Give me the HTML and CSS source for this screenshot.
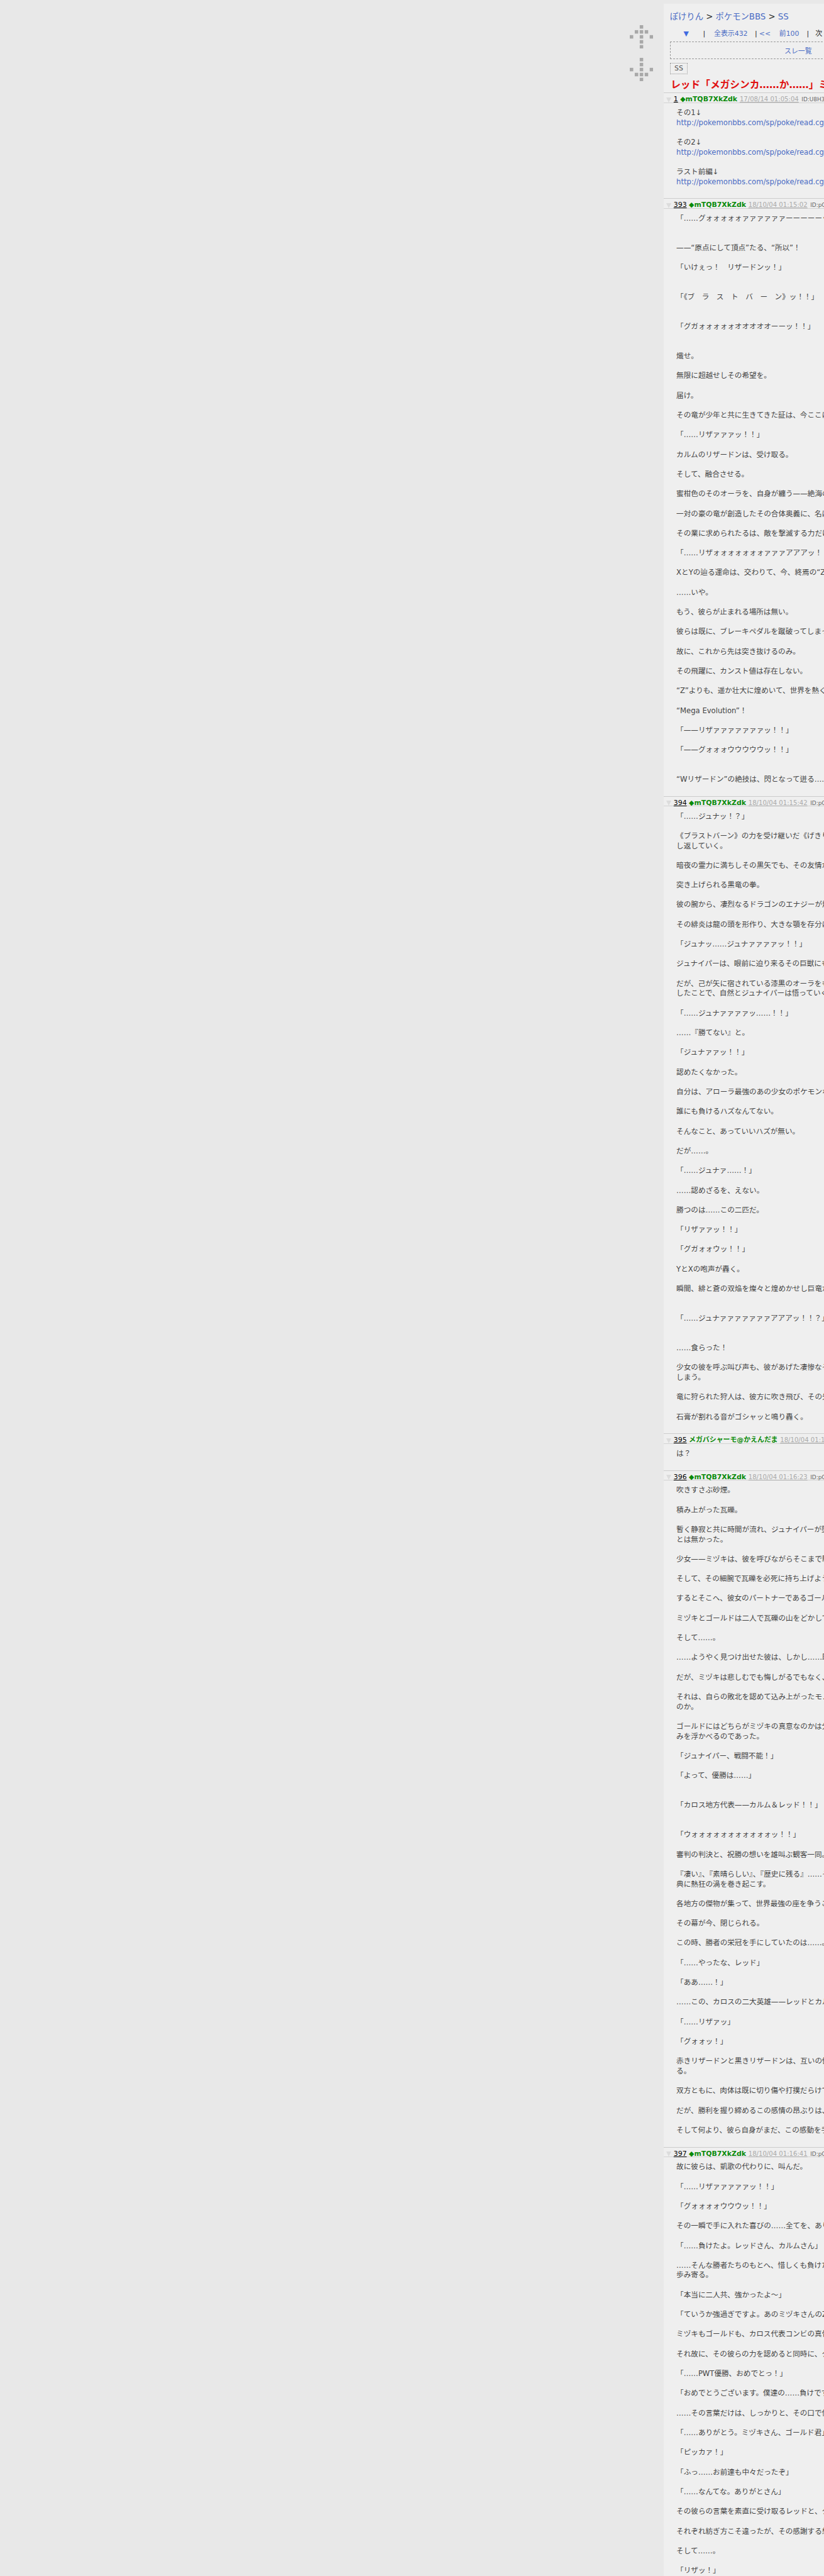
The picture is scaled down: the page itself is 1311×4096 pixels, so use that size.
FILE: index.html
```html
<!DOCTYPE html>
<html lang="ja">
<head>
<meta charset="utf-8">
<title>レッド「メガシンカ……か……」ミヅキ</title>
<link rel="stylesheet" href="styles.css">
</head>
<body>
<div class="page">
  <aside class="side">
    <svg class="arrow" viewBox="0 0 54 54" aria-hidden="true">
      <rect x="23" y="0" width="8" height="8"/>
      <rect x="11.500" y="11.500" width="8" height="8"/><rect x="23" y="11.500" width="8" height="8"/><rect x="34.500" y="11.500" width="8" height="8"/>
      <rect x="0" y="23" width="8" height="8"/><rect x="23" y="23" width="8" height="8"/><rect x="46" y="23" width="8" height="8"/>
      <rect x="23" y="34.500" width="8" height="8"/>
      <rect x="23" y="46" width="8" height="8"/>
    </svg>
    <svg class="arrow" viewBox="0 0 54 54" aria-hidden="true">
      <rect x="23" y="0" width="8" height="8"/>
      <rect x="23" y="11.500" width="8" height="8"/>
      <rect x="0" y="23" width="8" height="8"/><rect x="23" y="23" width="8" height="8"/><rect x="46" y="23" width="8" height="8"/>
      <rect x="11.500" y="34.500" width="8" height="8"/><rect x="23" y="34.500" width="8" height="8"/><rect x="34.500" y="34.500" width="8" height="8"/>
      <rect x="23" y="46" width="8" height="8"/>
    </svg>
  </aside>
  <main class="panel">
    <div class="head">
      <nav class="crumbs"><a href="#">ぽけりん</a> &gt; <a href="#">ポケモンBBS</a> &gt; <a href="#">SS</a></nav>
      <div class="pager">
        <a class="down" href="#">▼</a><span>|</span><a href="#">全表示432</a><span>|</span><a href="#">&lt;&lt;</a><a href="#">前100</a><span>|</span><span>次</span>
      </div>
      <div class="threads"><a href="#">スレ一覧</a></div>
      <div class="tag">SS</div>
      <h1 class="title">レッド「メガシンカ……か……」ミヅキ</h1>
    </div>

    <article class="post">
      <header class="post-head"><i class="tri"></i><a class="num" href="#">1</a><b class="name">◆mTQB7XkZdk</b><a class="date" href="#">17/08/14 01:05:04</a><a class="uid" href="#">ID:U8H3</a></header>
      <div class="post-body">その1↓
<a href="#">http://pokemonbbs.com/sp/poke/read.cgi</a>

その2↓
<a href="#">http://pokemonbbs.com/sp/poke/read.cgi</a>

ラスト前編↓
<a href="#">http://pokemonbbs.com/sp/poke/read.cgi</a></div>
    </article>

    <article class="post">
      <header class="post-head"><i class="tri"></i><a class="num" href="#">393</a><b class="name">◆mTQB7XkZdk</b><a class="date" href="#">18/10/04 01:15:02</a><a class="uid" href="#">ID:pG</a></header>
      <div class="post-body">「……グォォォォォァァァァァァーーーーーッ！！」


——“原点にして頂点”たる、“所以”！

「いけぇっ！　リザードンッ！」


「《ブ　ラ　ス　ト　バ　ー　ン》ッ！！」


「グガォォォォォオオオオオーーッ！！」


熾せ。

無限に超越せしその希望を。

届け。

その竜が少年と共に生きてきた証は、今ここに

「……リザァァァッ！！」

カルムのリザードンは、受け取る。

そして、融合させる。

蜜柑色のそのオーラを、自身が纏う——絶海の

一対の豪の竜が創造したその合体奥義に、名は

その業に求められたるは、敵を撃滅する力だけ

「……リザォォォォォォォァァァアアアッ！！

XとYの辿る運命は、交わりて、今、終焉の“Z”

……いや。

もう、彼らが止まれる場所は無い。

彼らは既に、ブレーキペダルを蹴破ってしまっ

故に、これから先は突き抜けるのみ。

その飛躍に、カンスト値は存在しない。

“Z”よりも、遥か壮大に煌めいて、世界を熱く

“Mega Evolution”！

「——リザァァァァァァァッ！！」

「——グォォォウウウウウッ！！」


“Wリザードン”の絶技は、閃となって迸る……</div>
    </article>

    <article class="post">
      <header class="post-head"><i class="tri"></i><a class="num" href="#">394</a><b class="name">◆mTQB7XkZdk</b><a class="date" href="#">18/10/04 01:15:42</a><a class="uid" href="#">ID:pG</a></header>
      <div class="post-body">「……ジュナッ！？」

《ブラストバーン》の力を受け継いだ《げきり
し返していく。

暗夜の霊力に満ちしその黒矢でも、その友情が

突き上げられる黒竜の拳。

彼の腕から、凄烈なるドラゴンのエナジーが燃

その緋炎は龍の頭を形作り、大きな顎を存分に

「ジュナッ……ジュナァァァァッ！！」

ジュナイパーは、眼前に迫り来るその巨獣にも

だが、己が矢に宿されている漆黒のオーラをも
したことで、自然とジュナイパーは悟っていく

「……ジュナァァァァッ……！！」

……『勝てない』と。

「ジュナァァッ！！」

認めたくなかった。

自分は、アローラ最強のあの少女のポケモンな

誰にも負けるハズなんてない。

そんなこと、あっていいハズが無い。

だが……。

「……ジュナァ……！」

……認めざるを、えない。

勝つのは……この二匹だ。

「リザァァッ！！」

「グガォォウッ！！」

YとXの咆声が轟く。

瞬間、緋と蒼の双焔を燦々と煌めかせし巨竜が


「……ジュナァァァァァァァアアアッ！！？」


……食らった！

少女の彼を呼ぶ叫び声も、彼があげた凄惨なそ
しまう。

竜に狩られた狩人は、彼方に吹き飛び、その先

石膏が割れる音がゴシャッと鳴り轟く。</div>
    </article>

    <article class="post">
      <header class="post-head"><i class="tri"></i><a class="num" href="#">395</a><b class="name">メガバシャーモ@かえんだま</b><a class="date" href="#">18/10/04 01:16:03</a></header>
      <div class="post-body">は？</div>
    </article>

    <article class="post">
      <header class="post-head"><i class="tri"></i><a class="num" href="#">396</a><b class="name">◆mTQB7XkZdk</b><a class="date" href="#">18/10/04 01:16:23</a><a class="uid" href="#">ID:pG</a></header>
      <div class="post-body">吹きすさぶ砂煙。

積み上がった瓦礫。

暫く静寂と共に時間が流れ、ジュナイパーが堕
とは無かった。

少女——ミヅキは、彼を呼びながらそこまで駆

そして、その細腕で瓦礫を必死に持ち上げよう

するとそこへ、彼女のパートナーであるゴール

ミヅキとゴールドは二人で瓦礫の山をどかして

そして……。

……ようやく見つけ出せた彼は、しかし……既

だが、ミヅキは悲しむでも悔しがるでもなく、

それは、自らの敗北を認めて込み上がったモノ
のか。

ゴールドにはどちらがミヅキの真意なのかは分
みを浮かべるのであった。

「ジュナイパー、戦闘不能！」

「よって、優勝は……」


「カロス地方代表——カルム＆レッド！！」


「ウォォォォォォォォォォォッ！！」

審判の判決と、祝勝の想いを雄叫ぶ観客一同。

『凄い』、『素晴らしい』、『歴史に残る』……そ
典に熱狂の渦を巻き起こす。

各地方の傑物が集って、世界最強の座を争うこ

その幕が今、閉じられる。

この時、勝者の栄冠を手にしていたのは……。

「……やったな、レッド」

「ああ……！」

……この、カロスの二大英雄——レッドとカル

「……リザァッ」

「グォォッ！」

赤きリザードンと黒きリザードンは、互いの健
る。

双方ともに、肉体は既に切り傷や打撲だらけで

だが、勝利を握り締めるこの感情の昂ぶりは、

そして何より、彼ら自身がまだ、この感動を手</div>
    </article>

    <article class="post">
      <header class="post-head"><i class="tri"></i><a class="num" href="#">397</a><b class="name">◆mTQB7XkZdk</b><a class="date" href="#">18/10/04 01:16:41</a><a class="uid" href="#">ID:pG</a></header>
      <div class="post-body">故に彼らは、凱歌の代わりに、叫んだ。

「……リザァァァァァッ！！」

「グォォォォウウウッ！！」

その一瞬で手に入れた喜びの……全てを、あり

「……負けたよ。レッドさん、カルムさん」

……そんな勝者たちのもとへ、惜しくも負けた
歩み寄る。

「本当に二人共、強かったよ〜」

「ていうか強過ぎですよ。あのミヅキさんのZ

ミヅキもゴールドも、カロス代表コンビの真骨

それ故に、その彼らの力を認めると同時に、ク

「……PWT優勝、おめでとっ！」

「おめでとうございます。僕達の……負けです

……その言葉だけは、しっかりと、その口で伝

「……ありがとう。ミヅキさん、ゴールド君」

「ピッカァ！」

「ふっ……お前達も中々だったぞ」

「……なんてな。ありがとさん」

その彼らの言葉を素直に受け取るレッドと、ク

それぞれ紡ぎ方こそ違ったが、その感謝する想

そして……。

「リザッ！」</div>
    </article>
  </main>
</div>
</body>
</html>
```
FILE: styles.css
```css
* { box-sizing: border-box; }

html, body {
  margin: 0;
  padding: 0;
  background: #e8e8e8;
}

body {
  font-family: "DejaVu Sans", "Noto Sans CJK JP", sans-serif;
  font-size: 11.6px;
  color: #444;
}

a {
  color: #4a6cc4;
  text-decoration: none;
}

.page {
  display: flex;
  width: 1311px;
  height: 4096px;
  overflow: hidden;
}

.side {
  flex: 0 0 1055.6px;
  display: flex;
  flex-direction: column;
  align-items: flex-end;
  gap: 14.8px;
  padding: 40px 16.4px 0 0;
}

.arrow {
  display: block;
  width: 37.2px;
  height: 37.2px;
  fill: #a8a8a8;
}

.panel {
  flex: 0 0 440px;
  margin-top: 5.5px;
  background: #efefef;
}

.head {
  padding: 13.6px 0 2px 10.2px;
}

.crumbs {
  height: 16.4px;
  font-size: 13.3px;
  line-height: 16.4px;
  color: #222;
  white-space: nowrap;
}

.pager {
  display: grid;
  grid-template-columns: 31px 17.7px 64.9px 6.8px 32px 43.8px 13.7px auto;
  margin-top: 10.6px;
  padding-left: 21.6px;
  height: 15.7px;
  font-size: 10.9px;
  line-height: 15.7px;
  color: #222;
  white-space: nowrap;
}

.down {
  color: #3f6be0;
}

.threads {
  display: flex;
  align-items: center;
  justify-content: center;
  width: 408px;
  height: 28px;
  margin-top: 3.8px;
  border: 1px dashed #999;
  font-size: 10.9px;
}

.tag {
  width: 28.5px;
  height: 18.2px;
  margin-top: 6.1px;
  border: 1px dotted #999;
  font-size: 10.9px;
  line-height: 16.2px;
  text-align: center;
  color: #555;
}

.title {
  margin: 7px 0 0 1.4px;
  height: 20.5px;
  font-size: 15.7px;
  font-weight: bold;
  line-height: 20.5px;
  color: #e01010;
  white-space: nowrap;
}

.post {
  border-top: 1px solid #ccc;
  padding-bottom: 18.1px;
}

.post-head {
  display: flex;
  align-items: baseline;
  height: 15.4px;
  border-bottom: 1px solid #d2d2d2;
  padding: 3px 0 0 4.1px;
  line-height: 14.4px;
  white-space: nowrap;
}

.tri {
  align-self: flex-end;
  flex: none;
  width: 0;
  height: 0;
  margin-right: 4.1px;
  border-style: solid;
  border-width: 8.6px 4.5px 0;
  border-color: #dcdcdc transparent transparent;
}

.num {
  font-size: 10.9px;
  color: #000;
  text-decoration: underline;
}

.name {
  margin-left: 3.5px;
  font-size: 10.9px;
  color: #0a8a0a;
}

.date {
  margin-left: 3.8px;
  font-size: 10.1px;
  color: #aaa;
  text-decoration: underline;
}

.uid {
  margin-left: 4.6px;
  font-size: 8.9px;
  color: #666;
}

.post-body {
  padding: 8.2px 0 0 20.5px;
  line-height: 15.65px;
  white-space: pre;
}
```
